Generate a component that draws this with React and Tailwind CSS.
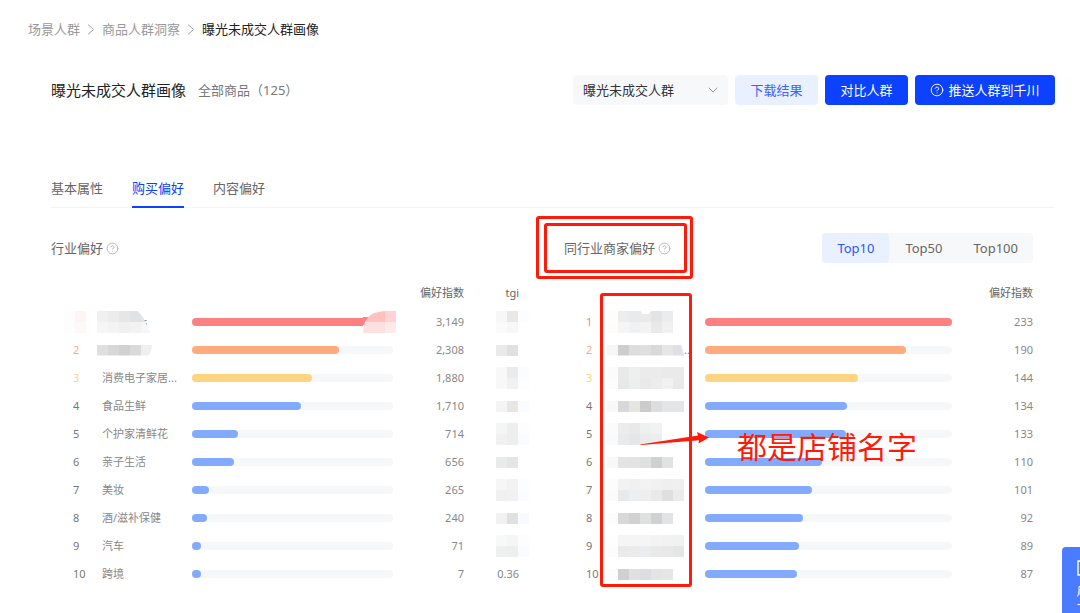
import React from "react";
import { CircleQuestionMark } from "lucide-react";

const industries = [
  {
    rank: 1,
    rankMask: [["#fefcfc", "#fff4f4"], ["#fefdfd", "#fff8f8"]],
    mask: [["#f0f0f0", "#ececec", "#e5e6e7", "#e1e2e3", "#e4e4e5"], ["#f6f6f6", "#f3f3f3", "#f0f0f1", "#f2f2f2", "#f6f6f6"]],
    maskClip: "[clip-path:polygon(0_0,74%_0,84%_30%,97%_100%,0_100%)]",
    tail: "s",
    value: 3149,
    tgi: [["#f7f7f7", "#e9e8e6", "#fcfdfe"], ["#fafafa", "#f7f7f7", "#ffffff"]],
  },
  {
    rank: 2,
    mask: [["#dfdfdf", "#d7d7d8", "#d0d1d2", "#dadadb", "#eeefef"]],
    maskClip: "[clip-path:polygon(0_0,100%_0,99%_50%,94%_100%,0_100%)]",
    value: 2308,
    tgi: [["#e9ebea", "#e0e0e0", "#ffffff"]],
  },
  {
    rank: 3,
    name: "消费电子家居...",
    value: 1880,
    tgi: [["#f8f8f8", "#ebebeb", "#fbfcfe"], ["#f8f8f8", "#f1f1f1", "#fdfdfe"]],
  },
  { rank: 4, name: "食品生鲜", value: 1710, tgi: [["#f4f4f4", "#e8e6e4", "#fafbfe"]] },
  {
    rank: 5,
    name: "个护家清鲜花",
    value: 714,
    tgi: [["#f4f6f5", "#eeeeee", "#fdfdfd"], ["#f1f1f1", "#eeeeee", "#f9fbff"]],
  },
  { rank: 6, name: "亲子生活", value: 656, tgi: [["#e9ebea", "#e4e6e5", "#ffffff"]] },
  {
    rank: 7,
    name: "美妆",
    value: 265,
    tgi: [["#f6f6f6", "#f2f2f2", "#fcfdff"], ["#f0f0f0", "#f1f1f1", "#fbfcff"]],
  },
  { rank: 8, name: "酒/滋补保健", value: 240, tgi: [["#f1f1f1", "#e0e0e0", "#f8fafd"]] },
  {
    rank: 9,
    name: "汽车",
    value: 71,
    tgi: [["#f7f9f8", "#f5f5f5", "#fdfdfd"], ["#eef0ef", "#eeeeee", "#fafbff"]],
  },
  { rank: 10, name: "跨境", value: 7, tgi: "0.36" },
];

const shops = [
  {
    rank: 1,
    mask: [["#fdfdfc", "#ededee", "#e9eaec", "#e9eae9", "#e4e4e4", "#ebecee"], ["#fdfcfb", "#f5f5f5", "#f0f1f3", "#f3f3f4", "#e9e9e9", "#f1f1f2"]],
    maskClip: "[clip-path:polygon(0_0,51%_0,54%_14%,63%_14%,67%_0,100%_0,100%_100%,0_100%)]",
    value: 233,
  },
  {
    rank: 2,
    mask: [["#f6f6f6", "#cccdce", "#dddddd", "#dedfe0", "#d9d9d9", "#e7e6e4", "#dfe0e5"]],
    maskClip: "[clip-path:polygon(0_0,96%_0,100%_100%,0_100%)]",
    tail: "..",
    value: 190,
  },
  {
    rank: 3,
    mask: [["#fbfbfb", "#e9e9e9", "#eef0ef", "#ebebeb", "#ebebeb", "#eaeaea", "#eaeaea"], ["#fdfcfa", "#e6e8ea", "#edefee", "#e9e9e9", "#ebeced", "#f1f1f2", "#e9e9e9"]],
    value: 144,
  },
  { rank: 4, mask: [["#f9f8f8", "#d7d8da", "#e5e5e2", "#cbcbcc", "#dcdedd", "#e4e5e6", "#e4e5e7"]], value: 134 },
  {
    rank: 5,
    mask: [["#fbfbfb", "#ebecee", "#e9e9e9", "#eff0f0", "#f1f2f3"], ["#fafafa", "#e9eaeb", "#e5e6e6", "#ebebeb", "#ededee"]],
    value: 133,
  },
  { rank: 6, mask: [["#f8f8f6", "#e3e4e4", "#e3e3e3", "#dfe1e0", "#cfd1d0", "#e1e3e3"]], value: 110 },
  {
    rank: 7,
    mask: [["#fcfcfc", "#f2f2f2", "#f0f0f0", "#f3f3f3", "#f1f1f1", "#efefef", "#f0f0f1"], ["#fbfbfb", "#e8eae9", "#edeef1", "#eeeeee", "#e9e9e9", "#dfdfdf", "#ebebec"]],
    value: 101,
  },
  { rank: 8, mask: [["#fcfcfc", "#d7d9d8", "#d1d1d1", "#dfe0e0", "#d0d2d1", "#e2e3e4"]], value: 92 },
  {
    rank: 9,
    mask: [["#fefefe", "#f5f5f5", "#f5f5f5", "#f5f5f5", "#f3f3f3", "#f2f2f2", "#f0f1f1"], ["#fcfcfc", "#e9eae9", "#ebebec", "#ebecee", "#e9eae8", "#e8e8e8", "#e4e6e6"]],
    value: 89,
  },
  { rank: 10, mask: [["#fcfcfc", "#cfd0d3", "#e1dfdf", "#dbdde2", "#e6e4e3", "#e5e6e8"]], value: 87 },
];

const rankColors = { 1: "text-[#ff8080]", 2: "text-[#ffa97c]", 3: "text-[#ffd27c]" };
const barColors = { 1: "bg-[#ff8080]", 2: "bg-[#ffab7e]", 3: "bg-[#ffd480]" };

const tabs = ["基本属性", "购买偏好", "内容偏好"];
const ranges = ["Top10", "Top50", "Top100"];

// pixelated block that hides private text
const Mosaic = ({ cells, className = "" }) => {
  const w = cells[0].length * 11;
  const h = cells.length * 11;
  return (
    <svg width={w} height={h} viewBox={`0 0 ${w} ${h}`} shapeRendering="crispEdges" className={`block shrink-0 ${className}`}>
      {cells.map((line, y) =>
        line.map((fill, x) => <rect key={`${x}-${y}`} x={x * 11} y={y * 11} width="11" height="11" fill={fill} />)
      )}
    </svg>
  );
};

const Separator = () => (
  <svg width="8" height="11" viewBox="0 0 8 11" fill="none" stroke="#a0a0a0" className="mx-[7px]">
    <path d="M1.200 .7 6.600 5.500 1.200 10.300" />
  </svg>
);

const SectionTitle = ({ children }) => (
  <h2 className="flex h-[30px] items-center gap-[3px] text-[13px] text-[#666]">
    {children}
    <CircleQuestionMark size={13} strokeWidth={1.5} className="text-[#aaa]" />
  </h2>
);

const RankTable = ({ rows, withTgi }) => {
  const max = rows[0].value;
  return (
    <table className="mt-[15px] w-full table-fixed text-[11px] leading-4 text-[#888]">
      <colgroup>
        <col className="w-[51px]" />
        <col className="w-[90px]" />
        <col />
        <col className={withTgi ? "w-[71px]" : "w-[81px]"} />
        {withTgi && <col className="w-[55px]" />}
      </colgroup>
      <thead>
        <tr className="h-[30px] text-right text-[#666]">
          <td colSpan={3}></td>
          <th className="font-normal">偏好指数</th>
          {withTgi && <th className="font-normal">tgi</th>}
        </tr>
      </thead>
      <tbody>
        {rows.map((row) => (
          <tr key={row.rank} className="h-7">
            <td className={rankColors[row.rank] || "text-[#777]"}>
              {row.rankMask ? <Mosaic cells={row.rankMask} className="ml-[13px]" /> : <span className="ml-[22px]">{row.rank}</span>}
            </td>
            <td className="whitespace-nowrap">
              {row.mask ? (
                <div className="flex items-center">
                  <Mosaic cells={row.mask} className={`${withTgi ? "-ml-[5px]" : "-ml-2"} ${row.maskClip || ""}`} />
                  {row.tail && <span className={withTgi ? "-ml-2.5" : ""}>{row.tail}</span>}
                </div>
              ) : (
                row.name
              )}
            </td>
            <td className="relative">
              <div className="h-2 rounded-full bg-[#f6f7f9]">
                <div
                  className={`h-2 min-w-[9px] rounded-full ${barColors[row.rank] || "bg-[#82aaff]"}`}
                  style={{ width: `${(row.value / max) * 100}%` }}
                />
              </div>
              {row.rankMask && (
                <svg width="33" height="22" viewBox="0 0 33 22" className="absolute top-[3px] -right-[3px]">
                  <path d="M0 0h33v22H0z" fill="#fff" />
                  <path d="M0 6h8v8H0z" fill="#ff8080" />
                  <path d="M2 11C5 4 11 1 22 0v11z" fill="#ffc0c0" />
                  <path d="M22 0h11v11H22z" fill="#ffd3d3" />
                  <path d="M0 22C0 18 1 14 2 11h20v11z" fill="#ffe0e1" />
                  <path d="M22 11h11v11H22z" fill="#ffeaea" />
                </svg>
              )}
            </td>
            <td className="text-right">{row.value.toLocaleString("en-US")}</td>
            {withTgi && (
              <td className="text-right">
                {typeof row.tgi === "string" ? (
                  row.tgi
                ) : (
                  <div className="flex justify-end">
                    <Mosaic cells={row.tgi} className="-mr-2.5" />
                  </div>
                )}
              </td>
            )}
          </tr>
        ))}
      </tbody>
    </table>
  );
};

const Annotations = () => (
  <div className="pointer-events-none absolute inset-0 text-[#ff1a0a]">
    <div className="absolute -top-[17px] -left-[28px] h-[63px] w-[157px] rounded-[3px] border-3 border-current" />
    <div className="absolute -top-[10px] -left-[20px] h-[50px] w-[143px] rounded-[3px] border-3 border-current" />
    <div className="absolute top-[60px] left-9 h-[294px] w-[92px] rounded-[3px] border-3 border-current" />
    <svg width="70" height="14" viewBox="0 0 70 14" fill="currentColor" className="absolute top-[199px] left-[76px]">
      <path d="M0 12.5 58 3.6 57 0 69 5.5 58.5 11.5 59 8.2 1 13z" />
    </svg>
    <p className="absolute top-[194px] left-[173px] text-[30px] leading-10 whitespace-nowrap">都是店铺名字</p>
  </div>
);

const App = () => {
  return (
    <div className="relative min-h-screen overflow-hidden bg-white pb-6 font-['Noto_Sans','Noto_Sans_CJK_SC',sans-serif] text-[13px] leading-5 text-[#333]">
      <nav className="flex items-center pt-[19px] pl-7 text-[#999]">
        <a href="#scene">场景人群</a>
        <Separator />
        <a href="#insight">商品人群洞察</a>
        <Separator />
        <span className="text-[#222]">曝光未成交人群画像</span>
      </nav>

      <main className="mt-9 mr-[25px] ml-[51px]">
        <header className="flex items-center justify-between">
          <div className="flex items-center">
            <h1 className="text-[15px] text-[#222]">曝光未成交人群画像</h1>
            <span className="ml-3 text-[#777]">全部商品（125）</span>
          </div>
          <div className="flex gap-[7px]">
            <div className="relative">
              <select
                aria-label="选择人群"
                className="h-[30px] w-[155px] appearance-none rounded bg-[#f7f8fa] pl-2.5 text-[#333]"
              >
                <option>曝光未成交人群</option>
              </select>
              <svg width="10" height="6" viewBox="0 0 10 6" fill="none" stroke="#999" className="pointer-events-none absolute top-3 right-2.5">
                <path d="M.8.7 5 5 9.2.7" />
              </svg>
            </div>
            <button className="h-[30px] w-[83px] rounded bg-[#e9f0ff] text-[#3a62ff]">下载结果</button>
            <button className="h-[30px] w-[83px] rounded bg-[#0b41ff] text-white">对比人群</button>
            <button className="flex h-[30px] w-[140px] items-center justify-center gap-1 rounded bg-[#0b41ff] text-white">
              <CircleQuestionMark size={14} strokeWidth={1.6} />
              推送人群到千川
            </button>
          </div>
        </header>

        <div className="mt-[73px] flex gap-[29px] border-b border-[#f3f3f3] text-[#666]">
          {tabs.map((tab) => (
            <button
              key={tab}
              className={`-mb-px flex h-[30px] border-b-2 ${tab === "购买偏好" ? "border-[#0b41ff] text-[#0b41ff]" : "border-transparent"}`}
            >
              {tab}
            </button>
          ))}
        </div>

        <div className="mt-[25px] grid grid-cols-2 gap-[22px]">
          <section className="pr-[23px]">
            <SectionTitle>行业偏好</SectionTitle>
            <RankTable rows={industries} withTgi />
          </section>

          <section className="relative pr-[22px]">
            <div className="flex justify-between">
              <SectionTitle>同行业商家偏好</SectionTitle>
              <div className="flex h-[30px] gap-px rounded bg-[#f7f8fa] text-[#666]">
                {ranges.map((range) => (
                  <button
                    key={range}
                    className={`rounded px-[15px] ${range === "Top10" ? "bg-[#e9f0ff] text-[#2a55ff]" : ""}`}
                  >
                    {range}
                  </button>
                ))}
              </div>
            </div>
            <RankTable rows={shops} />
            <Annotations />
          </section>
        </div>
      </main>

      <button className="absolute right-0 bottom-0 h-[66px] w-[18px] overflow-hidden rounded-tl bg-[#4b7bff] text-white" aria-label="反馈">
        <svg width="18" height="66" viewBox="0 0 18 66" fill="none" stroke="currentColor">
          <path d="M20 14h-4v14h4" strokeWidth="1.4" />
          <path d="M20 39.5h-3v4q0 3-1.5 6M18 42v6M15.500 57.500h4" />
        </svg>
      </button>
    </div>
  );
};

export default App;
